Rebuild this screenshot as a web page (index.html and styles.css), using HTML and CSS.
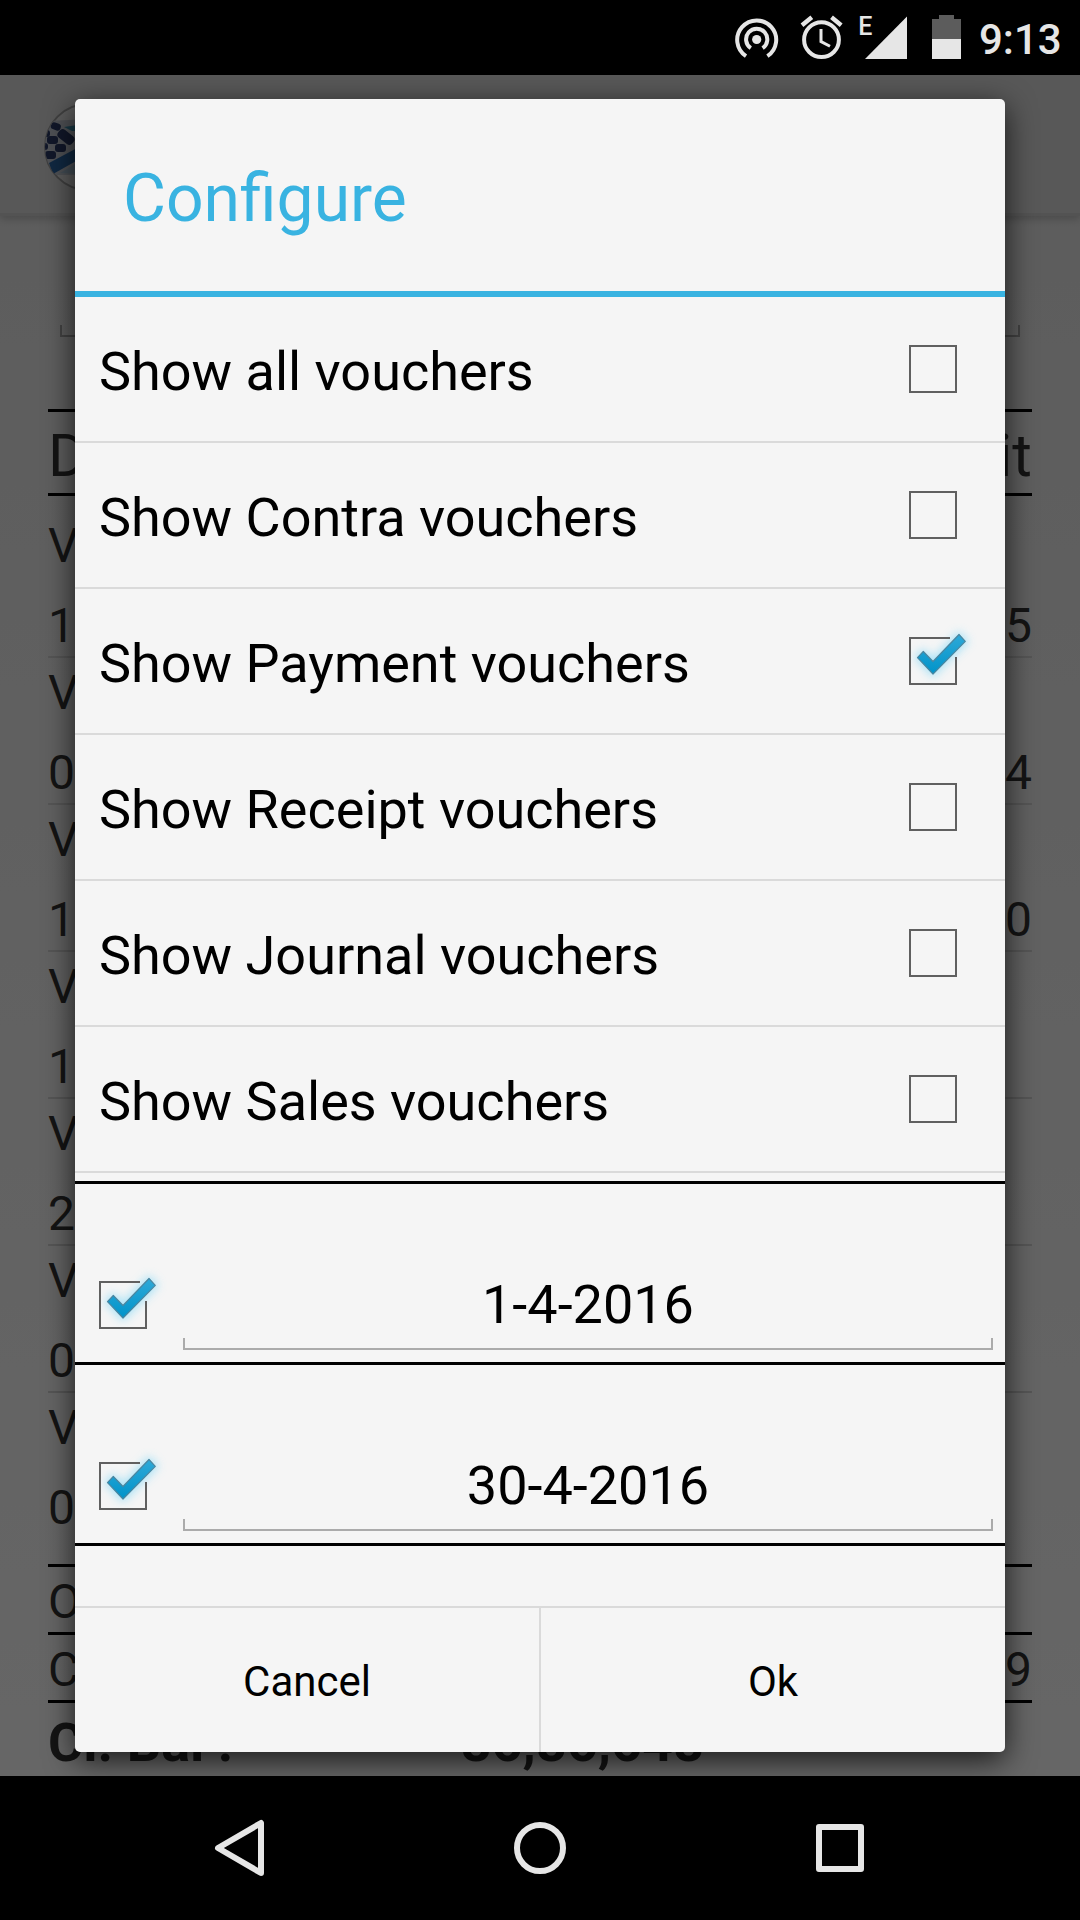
FILE: index.html
```html
<!DOCTYPE html>
<html lang="en">
<head>
    <meta charset="UTF-8">
    <meta name="viewport" content="width=device-width, initial-scale=1.0">
    <title>Configure</title>
    <link rel="stylesheet" href="styles.css">
</head>
<body>

    <!-- shared shapes -->
    <svg class="defs" width="0" height="0">
        <defs>
            <linearGradient id="tickFill" x1="0" y1="0" x2="0" y2="1">
                <stop offset="0" stop-color="#2fa9d8"/>
                <stop offset="1" stop-color="#0093c9"/>
            </linearGradient>
            <filter id="glow" x="-50%" y="-50%" width="200%" height="200%">
                <feGaussianBlur stdDeviation="5"/>
            </filter>
            <clipPath id="logoClip"><circle cx="44" cy="44" r="43"/></clipPath>
            <symbol id="box-off" viewBox="0 0 48 48">
                <rect x="1" y="1" width="46" height="46" fill="none" stroke="#606060" stroke-width="2"/>
            </symbol>
            <g id="box-on">
                <path d="M8 20.5 14.3 14 24 24 50 -3 57 4.3 24 37.5Z" fill="#8fdcf7" stroke="#8fdcf7" stroke-width="4" opacity=".75" filter="url(#glow)"/>
                <path d="M41 1H1V47H47V20" fill="none" stroke="#606060" stroke-width="2"/>
                <path d="M8.5 20.7 14.3 14.5 24 24.5 50 -2.5 56.3 4.3 24 37Z" fill="url(#tickFill)" stroke="#4a86a0" stroke-width="1.2" stroke-linejoin="round"/>
            </g>
        </defs>
    </svg>

    <div class="status-bar">
        <svg width="400" height="75" viewBox="680 0 400 75">
            <g fill="none" stroke="#e6e6e6" stroke-width="4">
                <path d="M746 56.2A19.5 19.5 0 1 1 767.4 56.2"/>
                <path d="M750.8 48.1A10.6 10.6 0 1 1 762.6 48.1"/>
            </g>
            <circle cx="756.7" cy="39.5" r="4.6" fill="#e6e6e6"/>
            <g fill="none" stroke="#e6e6e6">
                <circle cx="821.5" cy="39.7" r="17.4" stroke-width="4"/>
                <path d="M821 29V41.5L830 46.3" stroke-width="3"/>
                <path d="M802 25.3 811.8 17.3M831.5 17.3 841.2 25.3" stroke-width="4.4"/>
            </g>
            <path d="M865 59 907 16.5V59Z" fill="#e6e6e6"/>
            <path d="M939 15H954V19H961V39H932V19H939Z" fill="#5c5c5c"/>
            <path d="M932 39H961V59H932Z" fill="#e6e6e6"/>
            <text class="net" x="858.3" y="35">E</text>
            <text class="clock" x="979" y="54">9:13</text>
        </svg>
    </div>

    <div class="screen">
        <div class="action-bar">
            <svg width="88" height="88" viewBox="0 0 88 88">
                <circle cx="44" cy="44" r="43" fill="#e6e6e6" stroke="#a0a0a0" stroke-width="2"/>
                <g clip-path="url(#logoClip)">
                    <path d="M4 18 88 14V72H12L0 54V26Z" fill="#c3c9d2"/>
                    <path d="M20 24 60 18V28L28 28Z" fill="#3d8fae"/>
                    <path d="M5 60 50 36V48L9 71Z" fill="#2a64a4"/>
                    <path d="M16 70 50 50V72Z" fill="#a9c0d4"/>
                    <g fill="#2b3a66">
                        <rect x="7" y="20" width="10" height="7" rx="3" transform="rotate(20 12 23)"/>
                        <rect x="-4" y="27" width="10" height="7" rx="3"/>
                        <rect x="13" y="29" width="18" height="10" rx="4" transform="rotate(38 22 34)"/>
                        <rect x="3" y="33" width="11" height="8" rx="3"/>
                        <rect x="-5" y="40" width="9" height="7" rx="3"/>
                        <rect x="11" y="41" width="11" height="8" rx="3"/>
                        <rect x="1" y="48" width="11" height="8" rx="3"/>
                    </g>
                </g>
            </svg>
        </div>
        <div class="search"></div>
        <div class="table">
            <div class="table-head"><span>D</span><span>it</span></div>
            <div class="entry"><span>V</span><span class="amount">1<b>5</b></span></div>
            <div class="entry"><span>V</span><span class="amount">0<b>4</b></span></div>
            <div class="entry"><span>V</span><span class="amount">1<b>0</b></span></div>
            <div class="entry"><span>V</span><span class="amount">1</span></div>
            <div class="entry"><span>V</span><span class="amount">2</span></div>
            <div class="entry"><span>V</span><span class="amount">0</span></div>
            <div class="entry last"><span>V</span><span class="amount">0</span></div>
            <div class="total"><span>O</span></div>
            <div class="total"><span>C</span><span>9</span></div>
            <div class="closing"><span>Cl. Bal :</span><span class="balance">86,86,648</span></div>
        </div>

        <div class="overlay">
            <div class="dialog">
                <h1>Configure</h1>
                <div class="option"><span>Show all vouchers</span><svg class="check"><use href="#box-off"/></svg></div>
                <div class="option"><span>Show Contra vouchers</span><svg class="check"><use href="#box-off"/></svg></div>
                <div class="option"><span>Show Payment vouchers</span><svg class="check"><use href="#box-on"/></svg></div>
                <div class="option"><span>Show Receipt vouchers</span><svg class="check"><use href="#box-off"/></svg></div>
                <div class="option"><span>Show Journal vouchers</span><svg class="check"><use href="#box-off"/></svg></div>
                <div class="option"><span>Show Sales vouchers</span><svg class="check"><use href="#box-off"/></svg></div>
                <div class="dates">
                    <div class="date-row">
                        <svg class="check"><use href="#box-on"/></svg>
                        <div class="date-input">1-4-2016</div>
                    </div>
                    <div class="date-row">
                        <svg class="check"><use href="#box-on"/></svg>
                        <div class="date-input">30-4-2016</div>
                    </div>
                </div>
                <div class="buttons">
                    <button>Cancel</button>
                    <button>Ok</button>
                </div>
            </div>
        </div>
    </div>

    <div class="nav-bar">
        <svg width="60" height="60" viewBox="0 0 60 60"><path d="M8 30 51 5V55Z"/></svg>
        <svg width="60" height="60" viewBox="0 0 60 60"><circle cx="30" cy="30" r="23"/></svg>
        <svg width="60" height="60" viewBox="0 0 60 60"><rect x="9" y="9" width="42" height="42"/></svg>
    </div>

</body>
</html>
```
FILE: styles.css
```css
* {
    box-sizing: border-box;
}
body {
    margin: 0;
    width: 1080px;
    height: 1920px;
    overflow: hidden;
    display: flex;
    flex-direction: column;
    background-color: #000;
    font-family: Roboto, sans-serif;
}
.defs {
    position: absolute;
}

/* System bars */
.status-bar {
    height: 75px;
    display: flex;
    justify-content: flex-end;
}
.net {
    font-size: 25px;
    font-weight: 500;
    fill: #e6e6e6;
}
.clock {
    font-size: 42px;
    font-weight: 500;
    fill: #e6e6e6;
}
.nav-bar {
    height: 144px;
    display: flex;
    justify-content: center;
    align-items: center;
    gap: 240px;
}
.nav-bar svg {
    fill: none;
    stroke: #e6e6e6;
    stroke-width: 6;
    stroke-linejoin: round;
}

/* Page behind the dialog */
.screen {
    position: relative;
    height: 1701px;
    overflow: hidden;
    background: linear-gradient(#e6e6e6, #fff);
    color: #333;
}
.action-bar {
    height: 141px;
    padding: 28px 44px;
    background-color: #dcdcdc;
    border-bottom: 3px solid #cfcfcf;
    box-shadow: 0 3px 8px rgba(0, 0, 0, 0.2);
}
.search {
    height: 12px;
    margin: 109px 60px 72px;
    border: 2px solid #a8a8a8;
    border-top: none;
}
.table {
    margin: 0 48px;
    border-top: 3px solid #000;
    font-size: 48px;
    white-space: nowrap;
}
.table-head {
    height: 84px;
    display: flex;
    justify-content: space-between;
    font-size: 60px;
    line-height: 87px;
    border-bottom: 3px solid #000;
}
.entry {
    height: 147px;
    padding-top: 5px;
    line-height: 60px;
    border-bottom: 2px solid #d4d4d4;
}
.table-head + .entry {
    height: 162px;
    padding-top: 20px;
}
.entry span {
    display: block;
}
.entry .amount {
    display: flex;
    justify-content: space-between;
    line-height: 100px;
}
.entry b {
    font-weight: 400;
}
.entry.last {
    height: 174px;
    border-bottom: 3px solid #000;
}
.total {
    height: 68px;
    display: flex;
    justify-content: space-between;
    line-height: 70px;
    border-bottom: 3px solid #000;
}
.closing {
    display: flex;
    font-size: 54px;
    font-weight: 700;
    line-height: 80px;
}
.balance {
    width: 471px;
    text-align: right;
}

/* Dialog */
.overlay {
    position: absolute;
    inset: 0;
    padding: 24px 75px;
    background-color: rgba(0, 0, 0, 0.6);
}
.dialog {
    height: 1653px;
    display: flex;
    flex-direction: column;
    background-color: #f5f5f5;
    border-radius: 5px;
    box-shadow: 0 8px 30px rgba(0, 0, 0, 0.75);
    color: #000;
}
.dialog h1 {
    height: 198px;
    margin: 0;
    padding: 0 48px;
    border-bottom: 6px solid #39b3e1;
    color: #39b3e1;
    font-size: 66px;
    font-weight: 400;
    line-height: 200px;
}
.option {
    height: 146px;
    padding: 0 48px 0 24px;
    display: flex;
    justify-content: space-between;
    align-items: center;
    border-bottom: 2px solid #dadada;
    font-size: 54px;
}
.option span {
    padding-top: 5px;
}
.check {
    width: 48px;
    height: 48px;
    overflow: visible;
}
.dates {
    margin-top: 8px;
    border-top: 3px solid #000;
}
.date-row {
    height: 181px;
    padding: 0 12px 12px 24px;
    display: flex;
    align-items: flex-end;
    gap: 36px;
    border-bottom: 3px solid #000;
}
.date-row .check {
    margin-bottom: 21px;
}
.date-input {
    flex: 1;
    height: 91px;
    font-size: 54px;
    line-height: 91px;
    text-align: center;
    border: solid #ababab;
    border-width: 0 2px 2px;
    /* side borders only run up a few pixels from the bottom line */
    border-image: linear-gradient(transparent 79px, #ababab 79px) 0 2 2;
}
.buttons {
    flex: 1;
    margin-top: 60px;
    display: flex;
    border-top: 2px solid #dadada;
}
.buttons button {
    flex: 1;
    padding: 3px 0 0;
    border: none;
    background: none;
    font-family: inherit;
    font-size: 42px;
    color: #000;
}
.buttons button + button {
    border-left: 2px solid #dadada;
}
```
